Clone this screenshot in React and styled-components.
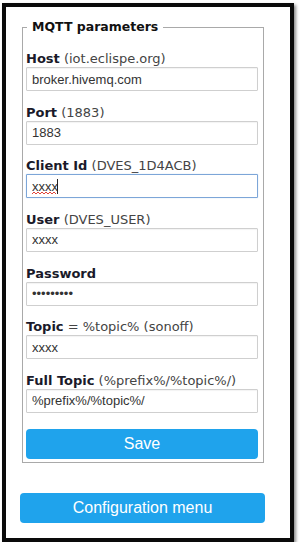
import React from 'react';
import styled, { createGlobalStyle } from 'styled-components';

const GlobalStyle = createGlobalStyle`
  html, body {
    margin: 0;
    padding: 0;
    background: #ffffff;
  }
  body {
    font-family: "DejaVu Sans", Verdana, sans-serif;
  }
`;

const Frame = styled.div`
  box-sizing: border-box;
  width: 292px;
  margin: 3px 0 0 2px;
  border: 4px solid #0a0a0a;
  background: #fff;
  box-shadow: 2px 2px 3px rgba(0, 0, 0, 0.45);
  padding: 12px 0 15px 16px;
`;

const Fieldset = styled.fieldset`
  box-sizing: border-box;
  width: 242px;
  margin: 0;
  border: 1px solid #a9a9a9;
  padding: 0 4px 3px 3px;
`;

const Legend = styled.legend`
  font-size: 12.5px;
  line-height: 16px;
  font-weight: bold;
  color: #111;
  padding: 0 5px 0 5px;
  margin-left: 1px;
`;

const Fields = styled.div`
  padding-top: 16px;
`;

const Field = styled.div`
  position: relative;

  & + & {
    margin-top: 13.67px;
  }
`;

const Label = styled.div`
  font-size: 13px;
  line-height: 16px;
  color: #444;
  white-space: nowrap;

  b {
    color: #1a1a2a;
  }
`;

const Input = styled.input`
  box-sizing: border-box;
  display: block;
  width: 232px;
  height: 24px;
  margin: 0;
  padding: 0 5px;
  border: 1px solid ${(p) => (p.$focused ? '#7da6d8' : '#cfcfcf')};
  box-shadow: ${(p) => (p.$focused ? '0 0 1px #9cc0ea' : 'inset 0 1px 1px rgba(0,0,0,0.05)')};
  border-radius: 1px;
  font-family: "Liberation Sans", Arial, sans-serif;
  font-size: 13px;
  color: #333;
  outline: none;
  background: #fff;
`;

/* spell-check squiggle and caret drawn over the focused input */
const Squiggle = styled.svg`
  position: absolute;
  left: 6px;
  top: 33px;
  pointer-events: none;
`;

const Caret = styled.span`
  position: absolute;
  left: 31px;
  top: 21px;
  width: 1px;
  height: 15px;
  background: #222;
`;

const Button = styled.button`
  box-sizing: border-box;
  display: block;
  width: ${(p) => p.$width}px;
  height: 30px;
  margin: ${(p) => p.$margin};
  border: 0;
  border-radius: 4px;
  background: #1fa3ec;
  color: #fff;
  font-family: "Liberation Sans", Arial, sans-serif;
  font-size: 16px;
  line-height: 30px;
  padding: 0;
  cursor: pointer;
`;

const fields = [
  { name: 'Host', hint: '(iot.eclispe.org)', value: 'broker.hivemq.com' },
  { name: 'Port', hint: '(1883)', value: '1883' },
  { name: 'Client Id', hint: '(DVES_1D4ACB)', value: 'xxxx', focused: true },
  { name: 'User', hint: '(DVES_USER)', value: 'xxxx' },
  { name: 'Password', hint: '', value: '123456789', type: 'password' },
  { name: 'Topic', hint: '= %topic% (sonoff)', value: 'xxxx' },
  { name: 'Full Topic', hint: '(%prefix%/%topic%/)', value: '%prefix%/%topic%/' },
];

export default function App() {
  return (
    <>
      <GlobalStyle />
      <Frame>
        <Fieldset>
          <Legend>MQTT parameters</Legend>
          <Fields>
            {fields.map((f) => (
              <Field key={f.name}>
                <Label>
                  <b>{f.name}</b>{f.hint && ' ' + f.hint}
                </Label>
                <Input
                  type={f.type || 'text'}
                  defaultValue={f.value}
                  spellCheck={false}
                  $focused={f.focused}
                />
                {f.focused && (
                  <>
                    <Squiggle width="24" height="4" viewBox="0 0 24 4">
                      <path d="M0 3 L2 1 L4 3 L6 1 L8 3 L10 1 L12 3 L14 1 L16 3 L18 1 L20 3 L22 1 L24 3" fill="none" stroke="#e0453a" strokeWidth="1" />
                    </Squiggle>
                    <Caret />
                  </>
                )}
              </Field>
            ))}
          </Fields>
          <Button $width={232} $margin="16px 0 0 0">Save</Button>
        </Fieldset>
        <Button $width={245} $margin="30px 0 0 -2px">Configuration menu</Button>
      </Frame>
    </>
  );
}
